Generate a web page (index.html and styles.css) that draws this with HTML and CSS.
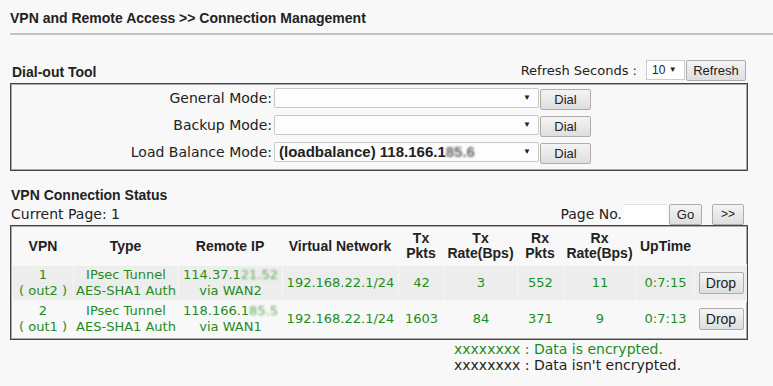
FILE: index.html
```html
<html lang="en">
<head>
  <title>Connection Management</title>
  <meta charset="UTF-8">
  <link rel="stylesheet" href="styles.css">
</head>
<body>
  <div class="title-bar">
    <h1>VPN and Remote Access &gt;&gt; Connection Management</h1>
  </div>

  <div class="page">
    <div class="bar dial-bar">
      <h2>Dial-out Tool</h2>
      <div class="refresh">
        <span>Refresh Seconds :</span>
        <span class="mini-select">10 <i>&#9660;</i></span>
        <button class="btn">Refresh</button>
      </div>
    </div>

    <div class="box dial-box">
      <div class="dial-row">
        <label>General Mode:</label>
        <span class="select"><b></b><i>&#9660;</i></span>
        <button class="btn dial">Dial</button>
      </div>
      <div class="dial-row">
        <label>Backup Mode:</label>
        <span class="select"><b></b><i>&#9660;</i></span>
        <button class="btn dial">Dial</button>
      </div>
      <div class="dial-row">
        <label>Load Balance Mode:</label>
        <span class="select"><b>(loadbalance) 118.166.1<span class="masked">85.6</span></b><i>&#9660;</i></span>
        <button class="btn dial">Dial</button>
      </div>
    </div>

    <h2 class="status-title">VPN Connection Status</h2>
    <div class="bar page-bar">
      <span>Current Page: 1</span>
      <div class="pager">
        <span>Page No.</span>
        <span class="page-input"></span>
        <button class="btn">Go</button>
        <button class="btn next">&gt;&gt;</button>
      </div>
    </div>

    <div class="box table-box">
      <table class="vpn-table">
        <colgroup>
          <col style="width:60px"><col style="width:105px"><col style="width:104px"><col style="width:116px">
          <col style="width:46px"><col style="width:73px"><col style="width:46px"><col style="width:73px">
          <col style="width:58px"><col style="width:53px">
        </colgroup>
        <tr class="head">
          <th>VPN</th><th>Type</th><th>Remote IP</th><th>Virtual Network</th>
          <th>Tx<br>Pkts</th><th>Tx<br>Rate(Bps)</th><th>Rx<br>Pkts</th><th>Rx<br>Rate(Bps)</th>
          <th class="up">UpTime</th><th></th>
        </tr>
        <tr class="odd">
          <td>1<br>( out2 )</td><td>IPsec Tunnel<br>AES-SHA1 Auth</td>
          <td>114.37.1<span class="masked">21.52</span><br>via WAN2</td><td>192.168.22.1/24</td>
          <td>42</td><td>3</td><td>552</td><td>11</td><td>0:7:15</td>
          <td><button class="btn drop">Drop</button></td>
        </tr>
        <tr>
          <td>2<br>( out1 )</td><td>IPsec Tunnel<br>AES-SHA1 Auth</td>
          <td>118.166.1<span class="masked">85.5</span><br>via WAN1</td><td>192.168.22.1/24</td>
          <td>1603</td><td>84</td><td>371</td><td>9</td><td>0:7:13</td>
          <td><button class="btn drop">Drop</button></td>
        </tr>
      </table>
    </div>

    <div class="legend">
      <div class="enc">xxxxxxxx : Data is encrypted.</div>
      <div>xxxxxxxx : Data isn't encrypted.</div>
    </div>
  </div>
</body>
</html>
```

FILE: styles.css
```css
body{
  margin: 0;
  background: #f8f8f8;
  font-family: "DejaVu Sans", Verdana, sans-serif;
  font-size: 14px;
  color: #222;
}
h1, h2{
  margin: 0;
  font-family: "Liberation Sans", Arial, sans-serif;
  font-weight: bold;
  color: #222;
}
.title-bar{
  margin-left: 10px;
  padding: 10px 0 7px;
  border-bottom: 2px solid #c4c4c4;
}
.title-bar h1{
  font-size: 14px;
  line-height: 16px;
}
.page{
  width: 738px;
  padding-left: 10px;
}
.bar{
  display: flex;
  align-items: center;
  justify-content: space-between;
}
.dial-bar{
  margin-top: 24px;
  height: 22px;
  padding-left: 2px;
}
.dial-bar h2{
  font-size: 14px;
  margin-top: 3px;
}
.refresh{
  display: flex;
  align-items: center;
  font-size: 13px;
  padding-right: 2px;
}
.refresh > span:first-child{
  margin-right: 9px;
}
.mini-select{
  font-family: "Liberation Sans", Arial, sans-serif;
  font-size: 12px;
  background: #fff;
  border: 1px solid #ccc;
  height: 18px;
  line-height: 18px;
  width: 32px;
  padding-left: 5px;
  margin-right: 1px;
}
.mini-select i, .select i{
  font-style: normal;
  font-size: 8px;
  vertical-align: 2px;
}
.btn{
  font-family: "Liberation Sans", Arial, sans-serif;
  font-size: 13px;
  color: #222;
  height: 21px;
  padding: 0 8px;
  border: 1px solid #adadad;
  border-radius: 2px;
  background: linear-gradient(#f4f4f4, #dedede);
}
.refresh .btn{
  width: 60px;
  padding: 0;
}
.box{
  border: 1px solid #444;
  box-shadow: inset 0 0 0 1px #aaa;
  margin-top: 2px;
}
.dial-box{
  padding: 0 0 5px;
}
.dial-row{
  display: flex;
  align-items: center;
  height: 27px;
}
.dial-row label{
  width: 261px;
  text-align: right;
  padding-right: 2px;
}
.select{
  display: flex;
  align-items: center;
  justify-content: space-between;
  width: 252px;
  height: 18px;
  padding: 0 7px 0 4px;
  background: #fdfdfd;
  border: 1px solid #c8c8c8;
  border-radius: 2px;
  font-family: "Liberation Sans", Arial, sans-serif;
  font-size: 15px;
}
.dial{
  width: 51px;
  padding: 0;
  margin: 3px 0 0 1px;
}
.masked{
  filter: blur(1.2px);
  opacity: .7;
}
.status-title{
  font-size: 14px;
  margin-top: 16px;
  padding-left: 1px;
}
.page-bar{
  padding-left: 1px;
  height: 22px;
}
.pager{
  display: flex;
  align-items: center;
  padding-right: 4px;
}
.page-input{
  width: 43px;
  height: 19px;
  background: #fff;
  border-top: 1px solid #ddd;
  margin: 0 2px 0 2px;
}
.pager .btn{
  width: 33px;
  padding: 0;
}
.pager .next{
  margin-left: 10px;
  width: 32px;
  font-size: 12px;
}
.table-box{
  margin-top: 0;
  padding: 2px 2px 3px;
}
.vpn-table{
  table-layout: fixed;
  border-collapse: separate;
  border-spacing: 0;
  width: 734px;
}
.vpn-table th{
  font-family: "Liberation Sans", Arial, sans-serif;
  font-size: 14px;
  line-height: 15px;
  height: 36px;
  padding: 0;
  text-align: center;
}
.vpn-table th.up{
  text-align: left;
  padding-left: 4px;
}
.vpn-table td{
  height: 36px;
  padding: 0;
  text-align: center;
  font-size: 13px;
  line-height: 16px;
  color: #1e8c1e;
  border-left: 1px solid #f6f6f6;
  border-top: 2px solid #f8f8f8;
}
.vpn-table td:first-child{
  border-left: none;
}
.odd td{
  background: #ededed;
}
.drop{
  width: 45px;
  padding: 0;
  height: 22px;
  font-size: 14px;
}
.legend{
  margin-left: 444px;
  margin-top: 1px;
  line-height: 16px;
}
.enc{
  color: #1e8c1e;
}
```
